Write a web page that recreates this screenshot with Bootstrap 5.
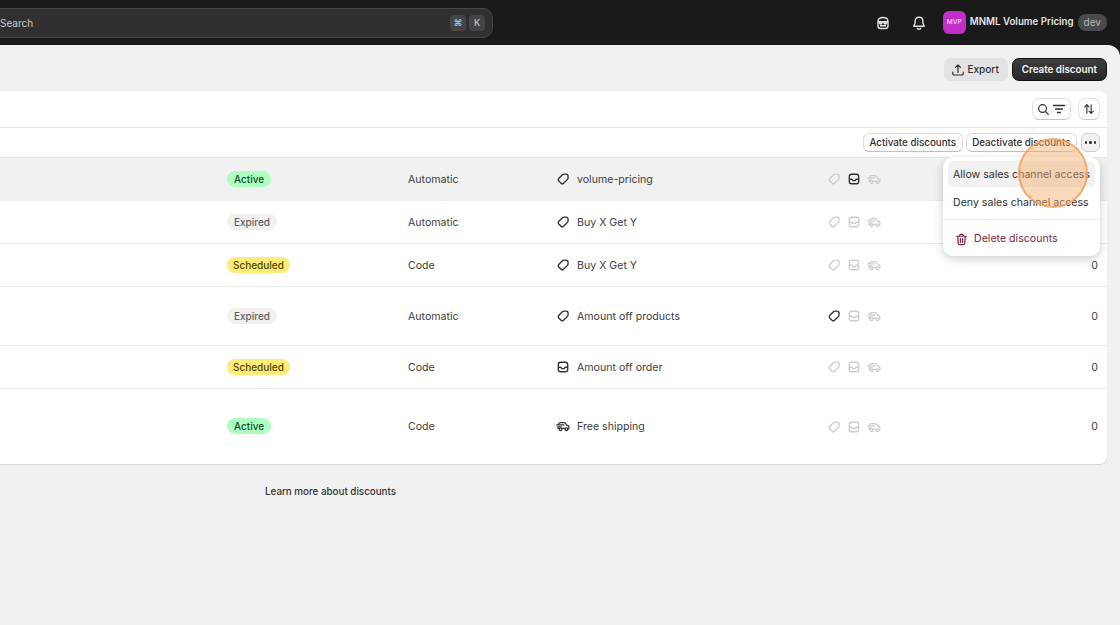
<!DOCTYPE html>
<html lang="en"><head><meta charset="utf-8"><title>Discounts</title>
<link href="https://cdn.jsdelivr.net/npm/bootstrap@5.3.0/dist/css/bootstrap.min.css" rel="stylesheet">
<style>
html,body{height:625px;overflow:hidden}
body{background:#1a1a1a;font-family:Inter,"Liberation Sans",sans-serif;font-size:10.6px;color:#303030;position:relative}
svg{display:block;flex:none}
.topbar{height:45px}
.searchbox{width:504px;height:30px;margin-left:-11px;margin-top:8px;background:#303030;border:1px solid #454545;border-radius:10px;padding:0 7px 0 10px;color:#c9c9c9;font-size:10px;gap:3px}
.keycap{width:16px;height:16px;border-radius:4px;background:#454545;color:#c4c4c4;font-size:9px;font-weight:500;line-height:16px;text-align:center}
.topright{padding-right:13px}
.bell-a{margin-right:20px}.bell-b{margin-right:16px}
.avatar{width:23px;height:23px;border-radius:6px;background:#c22ec8;color:#f2c6f2;font-size:6.5px;font-weight:600;line-height:23px;text-align:center}
.shopname{color:#e3e3e3;font-size:9.7px;font-weight:600;margin-left:4px;margin-right:4px}
.devpill{background:#4a4a4a;color:#b5b5b5;font-size:10px;border-radius:8px;padding:0 6px;line-height:17px}
.mainpane{background:#f1f1f1;height:580px;border-radius:0 12px 0 0;padding:13px 13px 0 0}
.headactions{height:33px;gap:4px}
.btn-export{background:#e3e3e3;color:#303030;font-size:10px;font-weight:500;height:23px;border-radius:7px;padding:0 9px 0 7px;border:0;gap:3px}
.btn-create{background:linear-gradient(#3f3f3f,#262626);color:#f4f4f4;font-size:9.8px;font-weight:600;height:23px;border-radius:7px;padding:1px 9px 0;border:1px solid #111}
.panel{background:#fff;border-radius:0 8px 8px 0;height:373px;box-shadow:0 1px 1px rgba(0,0,0,.12);overflow:hidden}
.toolrow{height:37px;border-bottom:1px solid #e6e6e6;padding:0 7px 0 0;gap:7px}
.bulkrow{height:30px;background:#fff;border-bottom:1px solid #e6e6e6;padding:0 7px 0 0;gap:3px}
.tool-btn{height:22px;background:#fff;border:1px solid #e0e0e0;border-bottom-color:#c4c4c4;border-radius:7px;padding:0 4px;gap:2px;color:#303030}
.bulk-btn{height:19px;background:#fff;border:1px solid #dcdcdc;border-bottom-color:#c0c0c0;border-radius:6px;padding:0 5.5px;color:#303030;font-size:9.8px;font-weight:500;line-height:1}
.more-gap{margin-left:1px}
.more-btn{width:19px;height:19px;background:#f1f1f1;border:1px solid #d0d0d0;border-radius:6px;gap:2px}
.more-btn i{width:2.5px;height:2.5px;border-radius:50%;background:#303030;display:block}
.datarow{border-bottom:1px solid #ebebeb;padding-right:9px;color:#404040}
.datarow:last-child{border-bottom:0}
.h-a{height:43px;background:#f1f1f1}.h-b{height:43px}.h-c{height:59px}.h-d{height:75px}
.col-spacer{width:227px;flex:none}
.col-status{width:181px;flex:none;padding-bottom:1px}
.col-kind{width:149px;flex:none;padding-top:1px}
.col-type{width:271px;flex:none;gap:6px;margin-left:-2px}
.col-type span{padding-top:1px}
.col-icons{width:60px;flex:none;gap:4px}
.col-num{flex:1;text-align:right;padding-top:1px}
.pill{display:block;width:fit-content;font-size:10px;font-weight:500;line-height:16px;padding:0 7px;border-radius:8px}
.pill-on{background:#aefebf;color:#0c5132}
.pill-off{background:#f0f0f0;color:#616161}
.pill-soon{background:#ffeb78;color:#4f4700;padding:0 6px}
.faint{color:#cccccc}.dark{color:#303030}
.learn{color:#303030;font-size:9.8px;font-weight:500;margin:21px 0 0 265px;line-height:14px}
.actmenu{position:absolute;left:943px;top:157px;width:157px;height:99px;background:#fff;border-radius:10px;box-shadow:0 3px 10px rgba(0,0,0,.2);padding:4px 5px;color:#303030}
.act-item{height:26px;line-height:28px;border-radius:6px;padding:0 5px;white-space:nowrap}
.act-hover{background:#f1f1f1;margin-bottom:2px}
.act-sep{border-top:1px solid #ebebeb;margin:4px -5px 6px}
.act-danger{color:#7a1f3a;padding-left:7px;gap:6px;display:flex;align-items:center}
.tapdot{position:absolute;left:1018px;top:138px;width:70px;height:70px;border-radius:50%;background:rgba(247,170,105,.45);border:2px solid rgba(243,160,90,.8)}
</style></head>
<body>
<svg width="0" height="0" class="position-absolute"><defs>
<symbol id="i-tag" viewBox="-1 -1 18 18"><path d="M9.500 2.600h2a2.200 2.200 0 0 1 2.200 2.200v2c0 .7-.3 1.200-.7 1.600l-4.400 4.400a2 2 0 0 1-2.800 0l-2.600-2.600a2 2 0 0 1 0-2.800l4.400-4.400c.5-.4 1.200-.4 1.900-.4z" fill="none" stroke="currentColor" stroke-width="1.500"/></symbol>
<symbol id="i-box" viewBox="-1 -1 18 18"><rect x="2.700" y="2.700" width="10.600" height="10.600" rx="2.600" fill="none" stroke="currentColor" stroke-width="1.500"/><path d="M2.900 8.300h2.800l1 1.500h2.600l1-1.500h2.800" fill="none" stroke="currentColor" stroke-width="1.500" stroke-linejoin="round"/></symbol>
<symbol id="i-truck" viewBox="-1 -1 18 18"><path d="M3 5.800C3.300 4.800 4 4.300 5 4.300h4c1 0 1.600.4 2.100 1.200l1 1.600 1.300.5c.8.300 1.300 1 1.300 1.800v1.200c0 .5-.3.800-.8.800M7.200 10.800h2.600M1 6.800h8M1.800 9h4M2.300 10.800h.8" fill="none" stroke="currentColor" stroke-width="1.400" stroke-linecap="round" stroke-linejoin="round"/><circle cx="5.300" cy="11.700" r="1.500" fill="none" stroke="currentColor" stroke-width="1.400"/><circle cx="11.800" cy="11.700" r="1.500" fill="none" stroke="currentColor" stroke-width="1.400"/></symbol>
</defs></svg>

<header class="topbar d-flex justify-content-between">
  <div class="searchbox d-flex align-items-center">
    <span class="flex-grow-1">Search</span>
    <span class="keycap">⌘</span><span class="keycap">K</span>
  </div>
  <div class="topright d-flex align-items-center">
    <svg class="bell-a" width="16" height="16" viewBox="0 0 16 16" fill="none" stroke="#e3e3e3" stroke-width="1.400"><path d="M3 6.500C3 4 5 2.500 8 2.500s5 1.500 5 4v4.500c0 1.600-1.400 2.500-2.600 2.500H5.600C4.400 13.500 3 12.600 3 11z"/><path d="M2.800 6.800h10.400M5 10.800h6"/><circle cx="5.800" cy="7.800" r="1.300" fill="#e3e3e3"/><circle cx="10.200" cy="7.800" r="1.300" fill="#e3e3e3"/></svg>
    <svg class="bell-b" width="16" height="16" viewBox="0 0 16 16" fill="none" stroke="#e3e3e3" stroke-width="1.400" stroke-linejoin="round"><path d="M8 2.200c-2.500 0-3.900 1.800-3.900 4v1.900c0 1-1.300 2.200-1.300 3.200h10.400c0-1-1.300-2.200-1.300-3.200V6.200c0-2.200-1.400-4-3.900-4z"/><path d="M6.300 13.300c.4.700 1 1 1.700 1s1.300-.3 1.700-1" stroke-linecap="round"/></svg>
    <span class="avatar">MVP</span>
    <span class="shopname">MNML Volume Pricing</span>
    <span class="devpill">dev</span>
  </div>
</header>

<main class="mainpane">
  <div class="headactions d-flex justify-content-end align-items-start">
    <button type="button" class="btn-export d-flex align-items-center"><svg width="14" height="14" viewBox="0 0 14 14" fill="none" stroke="#303030" stroke-width="1.200" stroke-linecap="round" stroke-linejoin="round"><path d="M7 9.500V2M4.500 4.300 7 1.800l2.500 2.500M1.800 9.200v1.500c0 .8.500 1.300 1.300 1.300h7.800c.8 0 1.300-.5 1.300-1.300V9.200"/></svg>Export</button>
    <button type="button" class="btn-create">Create discount</button>
  </div>
  <section class="panel">
    <div class="toolrow d-flex justify-content-end align-items-center">
      <span class="tool-btn d-flex align-items-center"><svg width="13" height="13" viewBox="0 0 14 14" fill="none" stroke="#303030" stroke-width="1.300" stroke-linecap="round"><circle cx="6" cy="6" r="4.200"/><path d="m9.200 9.200 3 3"/></svg><svg width="14" height="14" viewBox="0 0 14 14" fill="none" stroke="#303030" stroke-width="1.300" stroke-linecap="round"><path d="M1.500 3.500h11M3.500 7h7M5.500 10.500h3"/></svg></span>
      <span class="tool-btn d-flex align-items-center"><svg width="12" height="14" viewBox="0 0 14 14" fill="none" stroke="#303030" stroke-width="1.300" stroke-linecap="round" stroke-linejoin="round"><path d="M4.500 12V2M2 4.500 4.500 2 7 4.500M9.500 2v10M7 9.500 9.500 12 12 9.500"/></svg></span>
    </div>
    <div class="bulkrow d-flex justify-content-end align-items-center">
      <button type="button" class="bulk-btn">Activate discounts</button>
      <button type="button" class="bulk-btn">Deactivate discounts</button>
      <span class="more-btn more-gap d-flex align-items-center justify-content-center"><i></i><i></i><i></i></span>
    </div>

    <div class="datarow h-a d-flex align-items-center">
      <div class="col-spacer"></div><div class="col-status"><span class="pill pill-on">Active</span></div><div class="col-kind">Automatic</div>
      <div class="col-type d-flex align-items-center"><svg class="dark" width="16" height="16"><use href="#i-tag"/></svg><span>volume-pricing</span></div>
      <div class="col-icons d-flex"><svg class="faint" width="16" height="16"><use href="#i-tag"/></svg><svg class="dark" width="16" height="16"><use href="#i-box"/></svg><svg class="faint" width="16" height="16"><use href="#i-truck"/></svg></div>
      <div class="col-num">0</div>
    </div>
    <div class="datarow h-b d-flex align-items-center">
      <div class="col-spacer"></div><div class="col-status"><span class="pill pill-off">Expired</span></div><div class="col-kind">Automatic</div>
      <div class="col-type d-flex align-items-center"><svg class="dark" width="16" height="16"><use href="#i-tag"/></svg><span>Buy X Get Y</span></div>
      <div class="col-icons d-flex"><svg class="faint" width="16" height="16"><use href="#i-tag"/></svg><svg class="faint" width="16" height="16"><use href="#i-box"/></svg><svg class="faint" width="16" height="16"><use href="#i-truck"/></svg></div>
      <div class="col-num">0</div>
    </div>
    <div class="datarow h-b d-flex align-items-center">
      <div class="col-spacer"></div><div class="col-status"><span class="pill pill-soon">Scheduled</span></div><div class="col-kind">Code</div>
      <div class="col-type d-flex align-items-center"><svg class="dark" width="16" height="16"><use href="#i-tag"/></svg><span>Buy X Get Y</span></div>
      <div class="col-icons d-flex"><svg class="faint" width="16" height="16"><use href="#i-tag"/></svg><svg class="faint" width="16" height="16"><use href="#i-box"/></svg><svg class="faint" width="16" height="16"><use href="#i-truck"/></svg></div>
      <div class="col-num">0</div>
    </div>
    <div class="datarow h-c d-flex align-items-center">
      <div class="col-spacer"></div><div class="col-status"><span class="pill pill-off">Expired</span></div><div class="col-kind">Automatic</div>
      <div class="col-type d-flex align-items-center"><svg class="dark" width="16" height="16"><use href="#i-tag"/></svg><span>Amount off products</span></div>
      <div class="col-icons d-flex"><svg class="dark" width="16" height="16"><use href="#i-tag"/></svg><svg class="faint" width="16" height="16"><use href="#i-box"/></svg><svg class="faint" width="16" height="16"><use href="#i-truck"/></svg></div>
      <div class="col-num">0</div>
    </div>
    <div class="datarow h-b d-flex align-items-center">
      <div class="col-spacer"></div><div class="col-status"><span class="pill pill-soon">Scheduled</span></div><div class="col-kind">Code</div>
      <div class="col-type d-flex align-items-center"><svg class="dark" width="16" height="16"><use href="#i-box"/></svg><span>Amount off order</span></div>
      <div class="col-icons d-flex"><svg class="faint" width="16" height="16"><use href="#i-tag"/></svg><svg class="faint" width="16" height="16"><use href="#i-box"/></svg><svg class="faint" width="16" height="16"><use href="#i-truck"/></svg></div>
      <div class="col-num">0</div>
    </div>
    <div class="datarow h-d d-flex align-items-center">
      <div class="col-spacer"></div><div class="col-status"><span class="pill pill-on">Active</span></div><div class="col-kind">Code</div>
      <div class="col-type d-flex align-items-center"><svg class="dark" width="16" height="16"><use href="#i-truck"/></svg><span>Free shipping</span></div>
      <div class="col-icons d-flex"><svg class="faint" width="16" height="16"><use href="#i-tag"/></svg><svg class="faint" width="16" height="16"><use href="#i-box"/></svg><svg class="faint" width="16" height="16"><use href="#i-truck"/></svg></div>
      <div class="col-num">0</div>
    </div>
  </section>
  <p class="learn">Learn more about discounts</p>
</main>

<div class="actmenu">
  <div class="act-item act-hover">Allow sales channel access</div>
  <div class="act-item">Deny sales channel access</div>
  <div class="act-sep"></div>
  <div class="act-item act-danger"><svg width="13" height="13" viewBox="0 0 14 14" fill="none" stroke="#7a1f3a" stroke-width="1.300" stroke-linecap="round" stroke-linejoin="round"><path d="M1.800 3.500h10.400M5 3.300V2.600c0-.7.500-1.100 1.100-1.100h1.800c.6 0 1.100.4 1.100 1.100v.7M3 3.500l.5 7.700c0 .8.600 1.300 1.300 1.300h4.400c.7 0 1.300-.5 1.300-1.300l.5-7.700M5.800 6v4.200M8.200 6v4.200"/></svg><span>Delete discounts</span></div>
</div>
<div class="tapdot"></div>
</body></html>
